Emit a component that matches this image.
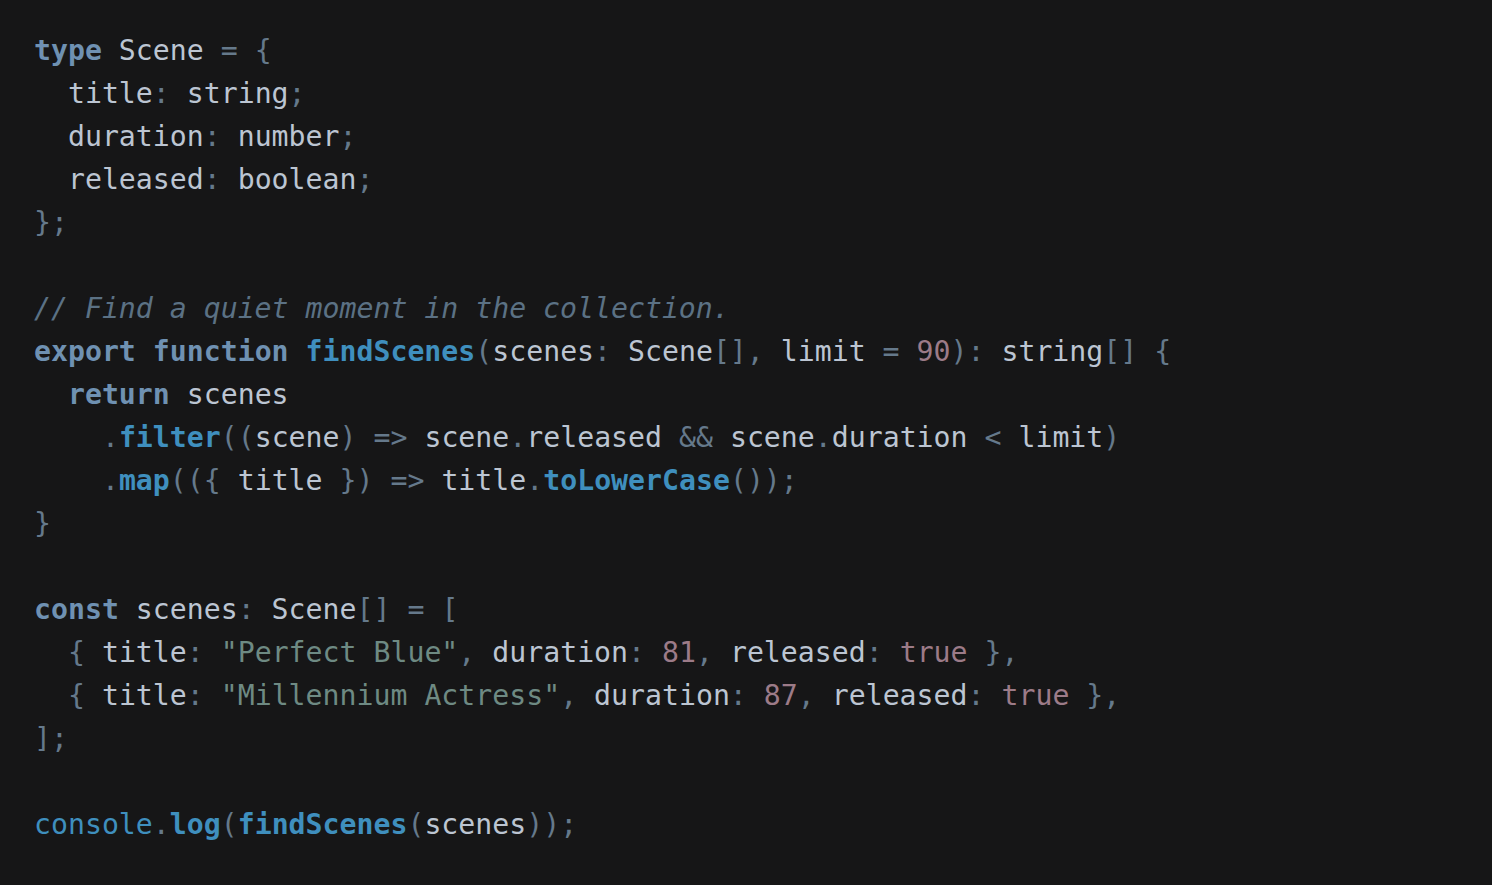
const C = {
  kw: "font-bold text-[#6f91b2]",
  fn: "font-bold text-[#3f8fbe]",
  fnl: "text-[#3f8fbe]",
  p: "text-[#65798b]",
  num: "text-[#9c7b88]",
  str: "text-[#6e8a83]",
  cm: "italic text-[#5b7184]",
};

const lines = [
  [["type", C.kw], " Scene ", ["=", C.p], " ", ["{", C.p]],
  ["  title", [":", C.p], " string", [";", C.p]],
  ["  duration", [":", C.p], " number", [";", C.p]],
  ["  released", [":", C.p], " boolean", [";", C.p]],
  [["};", C.p]],
  [],
  [["// Find a quiet moment in the collection.", C.cm]],
  [
    ["export", C.kw], " ", ["function", C.kw], " ", ["findScenes", C.fn], ["(", C.p],
    "scenes", [":", C.p], " Scene", ["[],", C.p], " limit ", ["=", C.p], " ", ["90", C.num],
    ["):", C.p], " string", ["[]", C.p], " ", ["{", C.p],
  ],
  ["  ", ["return", C.kw], " scenes"],
  [
    "    ", [".", C.p], ["filter", C.fn], ["((", C.p], "scene", [")", C.p], " ", ["=>", C.p],
    " scene", [".", C.p], "released ", ["&&", C.p], " scene", [".", C.p], "duration ",
    ["<", C.p], " limit", [")", C.p],
  ],
  [
    "    ", [".", C.p], ["map", C.fn], ["(({", C.p], " title ", ["})", C.p], " ", ["=>", C.p],
    " title", [".", C.p], ["toLowerCase", C.fn], ["());", C.p],
  ],
  [["}", C.p]],
  [],
  [["const", C.kw], " scenes", [":", C.p], " Scene", ["[]", C.p], " ", ["=", C.p], " ", ["[", C.p]],
  [
    "  ", ["{", C.p], " title", [":", C.p], " ", ['"Perfect Blue"', C.str], [",", C.p],
    " duration", [":", C.p], " ", ["81", C.num], [",", C.p], " released", [":", C.p], " ",
    ["true", C.num], " ", ["},", C.p],
  ],
  [
    "  ", ["{", C.p], " title", [":", C.p], " ", ['"Millennium Actress"', C.str], [",", C.p],
    " duration", [":", C.p], " ", ["87", C.num], [",", C.p], " released", [":", C.p], " ",
    ["true", C.num], " ", ["},", C.p],
  ],
  [["];", C.p]],
  [],
  [
    ["console", C.fnl], [".", C.p], ["log", C.fn], ["(", C.p], ["findScenes", C.fn], ["(", C.p],
    "scenes", ["));", C.p],
  ],
];

export default function App() {
  return (
    <div className="min-h-[885px] w-full bg-[#161617] pl-[34px] pt-[29px]">
      <pre className="font-['DejaVu_Sans_Mono',monospace] text-[28.2px] leading-[43px] text-[#bcc5d2]">
        {lines.map((line, i) => (
          <div key={i} className="h-[43px] whitespace-pre">
            {line.map((tok, j) =>
              typeof tok === "string" ? (
                <span key={j}>{tok}</span>
              ) : (
                <span key={j} className={tok[1]}>
                  {tok[0]}
                </span>
              )
            )}
          </div>
        ))}
      </pre>
    </div>
  );
}
